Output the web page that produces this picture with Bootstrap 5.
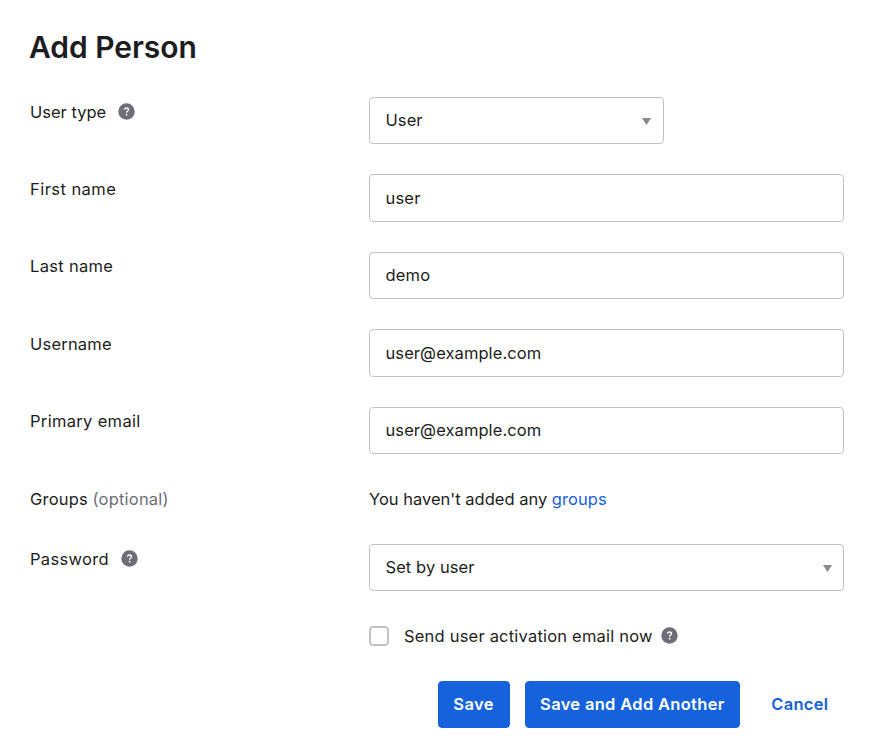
<!DOCTYPE html>
<html lang="en">
<head>
<meta charset="utf-8">
<meta name="viewport" content="width=device-width, initial-scale=1">
<title>Add Person</title>
<link href="https://cdn.jsdelivr.net/npm/bootstrap@5.3.0/dist/css/bootstrap.min.css" rel="stylesheet">
<style>
:root{--ink:#1d1d21;--line:#c1c1c8;--brand:#1662dd;--muted:#6e6e78}
body{font:400 16.5px/24px Inter,"Liberation Sans",sans-serif;color:var(--ink);background:#fff}
.person-form{padding:25.6px 26px 0 30px}
.person-title{font-size:30px;font-weight:600;line-height:42px;margin:0 0 29px -1px;letter-spacing:-.05px}
.form-rows{gap:30px}
.label-cell{width:339px;padding-top:2.7px}
.label-cell.has-help{padding-top:3.2px}
.field,.field:focus{height:47.5px;border:1px solid var(--line);border-radius:4px;padding:0 15.5px .3px;font-size:16.5px;color:var(--ink);box-shadow:none}
.field.form-select{height:47px;margin-bottom:.5px;padding-bottom:0;background-image:url("data:image/svg+xml,%3Csvg xmlns='http://www.w3.org/2000/svg' viewBox='0 0 9 7'%3E%3Cpath d='M0 0h9L4.5 7z' fill='%23888'/%3E%3C/svg%3E");background-size:9px 7px;background-position:right 11.5px top 20.5px}
.field.field-narrow{width:295px;background-position:right 12px top 20.5px}
.static-row{height:29.5px;padding-top:2.5px}
.help{width:17px;height:17px;flex:none}
.help-gap{margin:3.6px 0 0 12px}
.send-row{margin:33px 0 0 339px;height:24px}
.send-check{width:20px;height:20px;border:2px solid var(--line);border-radius:4px;margin:0 15px 0 0}
.send-row .help{margin-bottom:1px}
.optional{color:var(--muted)}
.brand-link{color:var(--brand)}
.actions{gap:15px;margin-top:33px}
.actions .btn{height:47px;border-radius:4px;font-size:16.5px;font-weight:600;line-height:45px;padding:0 14.5px;white-space:nowrap}
.actions .btn-primary{--bs-btn-bg:#1662dd;--bs-btn-border-color:#1662dd}
.actions .btn-link{padding-left:15px}
.ls-1{letter-spacing:.08px}
.ls-2{letter-spacing:.2px}
.ls-3{letter-spacing:.32px}
.ls-5{letter-spacing:.45px}
</style>
</head>
<body>
<svg class="d-none">
  <symbol id="help" viewBox="0 0 17 17"><circle cx="8.5" cy="8.5" r="8.2" fill="#6e6e78"/><path d="M6.5 6.8C6.6 5.6 7.3 5 8.5 5s2 .7 2 1.7c0 1.4-1.9 1.4-1.9 3" fill="none" stroke="#fff" stroke-width="1.35"/><circle cx="8.6" cy="11.7" r=".9" fill="#fff"/></symbol>
</svg>
<form class="person-form">
  <h1 class="person-title">Add Person</h1>
  <div class="form-rows d-flex flex-column">
    <div class="d-flex">
      <div class="label-cell has-help d-flex align-items-start"><label for="type">User type</label><svg class="help help-gap"><use href="#help"/></svg></div>
      <select id="type" class="form-select field field-narrow ls-1"><option>User</option></select>
    </div>
    <div class="d-flex">
      <label class="label-cell ls-5" for="first">First name</label>
      <div class="flex-fill"><input id="first" class="form-control field ls-2" value="user"></div>
    </div>
    <div class="d-flex">
      <label class="label-cell ls-3" for="last">Last name</label>
      <div class="flex-fill"><input id="last" class="form-control field ls-2" value="demo"></div>
    </div>
    <div class="d-flex">
      <label class="label-cell ls-2" for="login">Username</label>
      <div class="flex-fill"><input id="login" class="form-control field ls-1" value="user@example.com"></div>
    </div>
    <div class="d-flex">
      <label class="label-cell ls-3" for="email">Primary email</label>
      <div class="flex-fill"><input id="email" class="form-control field ls-1" value="user@example.com"></div>
    </div>
    <div class="d-flex static-row">
      <div class="label-cell pt-0"><span class="ls-2">Groups</span> <span class="optional ls-2">(optional)</span></div>
      <div><span>You haven't added any</span> <a href="#" class="brand-link text-decoration-none ls-1">groups</a></div>
    </div>
    <div class="d-flex">
      <div class="label-cell has-help d-flex align-items-start"><label class="ls-3" for="pass">Password</label><svg class="help help-gap"><use href="#help"/></svg></div>
      <div class="flex-fill"><select id="pass" class="form-select field ls-1"><option>Set by user</option></select></div>
    </div>
  </div>
  <div class="d-flex align-items-center send-row">
    <input id="send" type="checkbox" class="form-check-input send-check">
    <label class="ls-2" for="send">Send user activation email now</label>
    <svg class="help ms-2"><use href="#help"/></svg>
  </div>
  <div class="actions d-flex justify-content-end">
    <button type="button" class="btn btn-primary ls-5">Save</button>
    <button type="button" class="btn btn-primary ls-3">Save and Add Another</button>
    <button type="button" class="btn btn-link brand-link text-decoration-none ls-3">Cancel</button>
  </div>
</form>
<script src="https://cdn.jsdelivr.net/npm/bootstrap@5.3.0/dist/js/bootstrap.bundle.min.js"></script>
</body>
</html>
